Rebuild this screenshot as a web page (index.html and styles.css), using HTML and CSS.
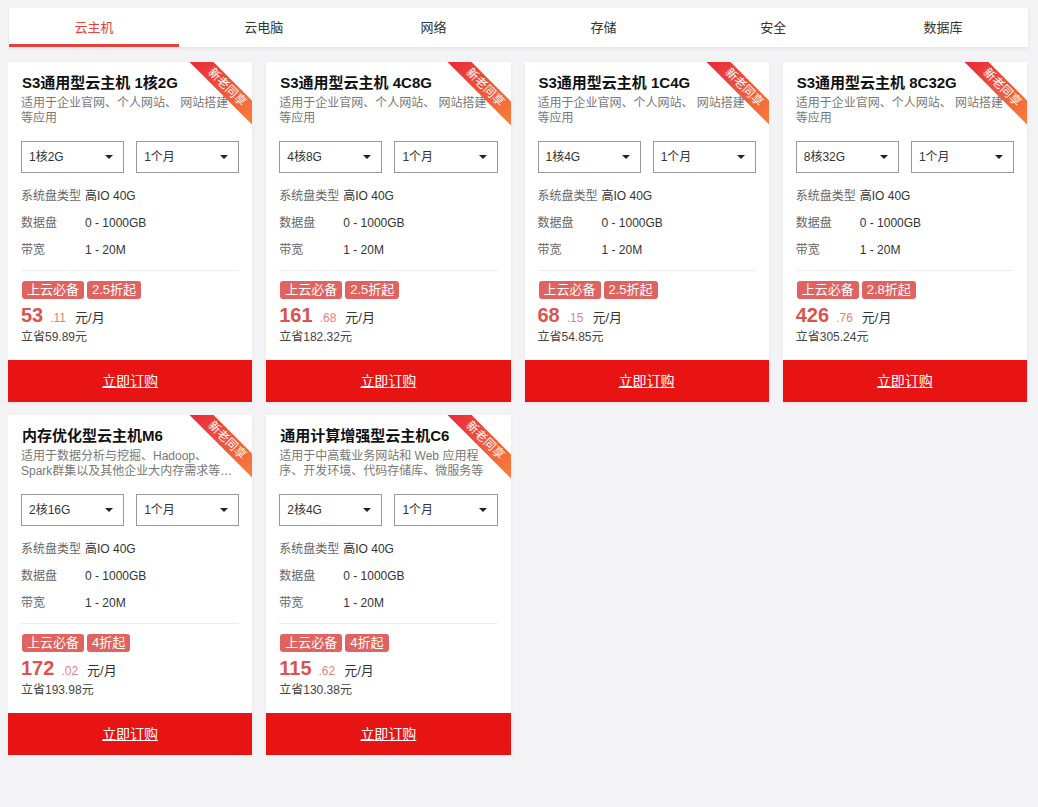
FILE: index.html
```html
<!DOCTYPE html>
<html lang="zh-CN">
<head>
    <meta charset="UTF-8">
    <title>云主机</title>
    <link rel="stylesheet" href="styles.css">
</head>
<body>
    <div class="tabs">
        <div class="tab active">云主机</div>
        <div class="tab">云电脑</div>
        <div class="tab">网络</div>
        <div class="tab">存储</div>
        <div class="tab">安全</div>
        <div class="tab">数据库</div>
    </div>

    <div class="cards">
        <div class="card">
            <div class="ribbon">新老同享</div>
            <div class="card-body">
                <div class="title">S3通用型云主机 1核2G</div>
                <div class="desc">适用于企业官网、个人网站、 网站搭建等应用</div>
                <div class="selects">
                    <div class="select">1核2G</div>
                    <div class="select">1个月</div>
                </div>
                <div class="spec"><span class="label">系统盘类型</span>高IO 40G</div>
                <div class="spec"><span class="label">数据盘</span>0 - 1000GB</div>
                <div class="spec"><span class="label">带宽</span>1 - 20M</div>
                <div class="divider"></div>
                <div class="tags"><span class="tag">上云必备</span><span class="tag">2.5折起</span></div>
                <div class="price"><span class="int">53</span><span class="dec">.11</span><span class="unit">元/月</span></div>
                <div class="save">立省59.89元</div>
            </div>
            <a class="buy" href="#">立即订购</a>
        </div>

        <div class="card">
            <div class="ribbon">新老同享</div>
            <div class="card-body">
                <div class="title">S3通用型云主机 4C8G</div>
                <div class="desc">适用于企业官网、个人网站、 网站搭建等应用</div>
                <div class="selects">
                    <div class="select">4核8G</div>
                    <div class="select">1个月</div>
                </div>
                <div class="spec"><span class="label">系统盘类型</span>高IO 40G</div>
                <div class="spec"><span class="label">数据盘</span>0 - 1000GB</div>
                <div class="spec"><span class="label">带宽</span>1 - 20M</div>
                <div class="divider"></div>
                <div class="tags"><span class="tag">上云必备</span><span class="tag">2.5折起</span></div>
                <div class="price"><span class="int">161</span><span class="dec">.68</span><span class="unit">元/月</span></div>
                <div class="save">立省182.32元</div>
            </div>
            <a class="buy" href="#">立即订购</a>
        </div>

        <div class="card">
            <div class="ribbon">新老同享</div>
            <div class="card-body">
                <div class="title">S3通用型云主机 1C4G</div>
                <div class="desc">适用于企业官网、个人网站、 网站搭建等应用</div>
                <div class="selects">
                    <div class="select">1核4G</div>
                    <div class="select">1个月</div>
                </div>
                <div class="spec"><span class="label">系统盘类型</span>高IO 40G</div>
                <div class="spec"><span class="label">数据盘</span>0 - 1000GB</div>
                <div class="spec"><span class="label">带宽</span>1 - 20M</div>
                <div class="divider"></div>
                <div class="tags"><span class="tag">上云必备</span><span class="tag">2.5折起</span></div>
                <div class="price"><span class="int">68</span><span class="dec">.15</span><span class="unit">元/月</span></div>
                <div class="save">立省54.85元</div>
            </div>
            <a class="buy" href="#">立即订购</a>
        </div>

        <div class="card">
            <div class="ribbon">新老同享</div>
            <div class="card-body">
                <div class="title">S3通用型云主机 8C32G</div>
                <div class="desc">适用于企业官网、个人网站、 网站搭建等应用</div>
                <div class="selects">
                    <div class="select">8核32G</div>
                    <div class="select">1个月</div>
                </div>
                <div class="spec"><span class="label">系统盘类型</span>高IO 40G</div>
                <div class="spec"><span class="label">数据盘</span>0 - 1000GB</div>
                <div class="spec"><span class="label">带宽</span>1 - 20M</div>
                <div class="divider"></div>
                <div class="tags"><span class="tag">上云必备</span><span class="tag">2.8折起</span></div>
                <div class="price"><span class="int">426</span><span class="dec">.76</span><span class="unit">元/月</span></div>
                <div class="save">立省305.24元</div>
            </div>
            <a class="buy" href="#">立即订购</a>
        </div>

        <div class="card">
            <div class="ribbon">新老同享</div>
            <div class="card-body">
                <div class="title">内存优化型云主机M6</div>
                <div class="desc">适用于数据分析与挖掘、Hadoop、<br>Spark群集以及其他企业大内存需求等场景的应用</div>
                <div class="selects">
                    <div class="select">2核16G</div>
                    <div class="select">1个月</div>
                </div>
                <div class="spec"><span class="label">系统盘类型</span>高IO 40G</div>
                <div class="spec"><span class="label">数据盘</span>0 - 1000GB</div>
                <div class="spec"><span class="label">带宽</span>1 - 20M</div>
                <div class="divider"></div>
                <div class="tags"><span class="tag">上云必备</span><span class="tag">4折起</span></div>
                <div class="price"><span class="int">172</span><span class="dec">.02</span><span class="unit">元/月</span></div>
                <div class="save">立省193.98元</div>
            </div>
            <a class="buy" href="#">立即订购</a>
        </div>

        <div class="card">
            <div class="ribbon">新老同享</div>
            <div class="card-body">
                <div class="title">通用计算增强型云主机C6</div>
                <div class="desc">适用于中高载业务网站和 Web 应用程序、开发环境、代码存储库、微服务等</div>
                <div class="selects">
                    <div class="select">2核4G</div>
                    <div class="select">1个月</div>
                </div>
                <div class="spec"><span class="label">系统盘类型</span>高IO 40G</div>
                <div class="spec"><span class="label">数据盘</span>0 - 1000GB</div>
                <div class="spec"><span class="label">带宽</span>1 - 20M</div>
                <div class="divider"></div>
                <div class="tags"><span class="tag">上云必备</span><span class="tag">4折起</span></div>
                <div class="price"><span class="int">115</span><span class="dec">.62</span><span class="unit">元/月</span></div>
                <div class="save">立省130.38元</div>
            </div>
            <a class="buy" href="#">立即订购</a>
        </div>
    </div>
</body>
</html>
```

FILE: styles.css
```css
body {
    margin: 8px;
    background-color: #f3f3f5;
    font-family: "Liberation Sans", "Noto Sans CJK SC", sans-serif;
    color: #333;
}
.tabs {
    display: flex;
    margin-left: 1px;
    width: 1019px;
    height: 39px;
    background-color: #fff;
    box-shadow: 0 1px 4px rgba(0, 0, 0, 0.08);
}
.tab {
    flex: 1;
    text-align: center;
    font-size: 13px;
    line-height: 40px;
    color: #333;
    box-sizing: border-box;
}
.tab.active {
    color: #e8403a;
    border-bottom: 3px solid #e8403a;
}
.cards {
    display: grid;
    grid-template-columns: repeat(4, 1fr);
    column-gap: 14px;
    row-gap: 13px;
    margin-top: 15px;
    width: 1019px;
}
.card {
    position: relative;
    overflow: hidden;
    background-color: #fff;
    box-shadow: 0 1px 3px rgba(0, 0, 0, 0.06);
}
.ribbon {
    position: absolute;
    left: 174px;
    top: 17px;
    width: 90px;
    height: 17px;
    line-height: 17px;
    text-align: center;
    font-size: 12px;
    color: #fff;
    background: linear-gradient(90deg, #e8283a, #f7823a);
    transform: rotate(45deg);
}
.card-body {
    padding: 12px 13px 14px;
}
.title {
    font-size: 15px;
    font-weight: bold;
    line-height: 18px;
    color: #111;
    padding-left: 1px;
}
.desc {
    margin-top: 4px;
    font-size: 12px;
    line-height: 15px;
    color: #777;
    height: 30px;
    display: -webkit-box;
    -webkit-line-clamp: 2;
    -webkit-box-orient: vertical;
    overflow: hidden;
}
.selects {
    display: flex;
    gap: 12px;
    margin-top: 15px;
    margin-bottom: 10px;
}
.select {
    position: relative;
    flex: 1;
    height: 32px;
    line-height: 30px;
    box-sizing: border-box;
    border: 1px solid #999;
    padding-left: 7px;
    font-size: 12px;
    color: #333;
}
.select::after {
    content: "";
    position: absolute;
    right: 10px;
    top: 13px;
    border-left: 4px solid transparent;
    border-right: 4px solid transparent;
    border-top: 4px solid #222;
}
.spec {
    font-size: 12px;
    line-height: 27px;
    color: #333;
}
.label {
    display: inline-block;
    width: 64px;
    color: #666;
}
.divider {
    margin-top: 6px;
    height: 1px;
    background-color: #eee;
}
.tags {
    display: flex;
    gap: 3px;
    margin-top: 10px;
    padding-left: 1px;
}
.tag {
    height: 18px;
    line-height: 18px;
    padding: 0 5px;
    font-size: 13px;
    color: #fff;
    background-color: #e06360;
    border-radius: 3px;
}
.price {
    margin-top: 3px;
    height: 26px;
    line-height: 26px;
    color: #d9534f;
}
.int {
    font-size: 20px;
    font-weight: bold;
}
.dec {
    font-size: 12px;
    margin-left: 7px;
    color: #e2827e;
}
.unit {
    font-size: 13px;
    color: #333;
    margin-left: 9px;
}
.save {
    font-size: 12px;
    line-height: 18px;
    color: #444;
}
.buy {
    display: block;
    height: 42px;
    line-height: 42px;
    text-align: center;
    font-size: 14px;
    color: #fff;
    background-color: #e81414;
}
```
